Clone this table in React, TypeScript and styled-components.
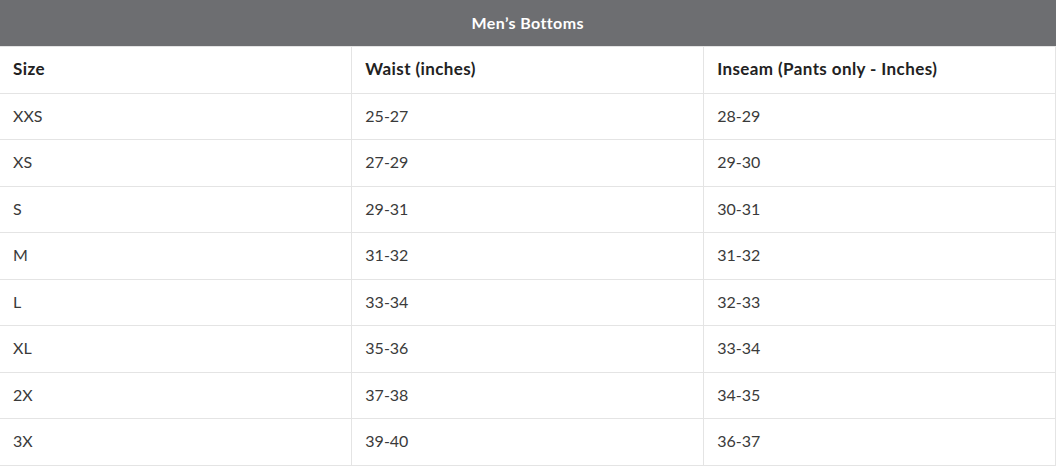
import React from 'react';
import styled, { createGlobalStyle } from 'styled-components';

const GlobalStyle = createGlobalStyle`
    body {
        margin: 0;
        background: #ffffff;
        font-family: Lato, "Noto Sans", sans-serif;
    }
`;

const rows = [
    ['XXS', '25-27', '28-29'],
    ['XS', '27-29', '29-30'],
    ['S', '29-31', '30-31'],
    ['M', '31-32', '31-32'],
    ['L', '33-34', '32-33'],
    ['XL', '35-36', '33-34'],
    ['2X', '37-38', '34-35'],
    ['3X', '39-40', '36-37'],
];

const Wrapper = styled.div`
    width: 1056px;
`;

const SizeTable = styled.table`
    width: 100%;
    border-collapse: collapse;
    table-layout: fixed;
`;

const TitleCell = styled.th`
    height: 44px;
    padding: 0 0 2px 0;
    background: #6d6e71;
    color: #ffffff;
    font-size: 16px;
    font-weight: 700;
    text-align: center;
    letter-spacing: 0.4px;
    border: none;
`;

const Cell = styled.td<{ $head?: boolean }>`
    height: 43.5px;
    padding: 0 0 2px 13px;
    border: 1px solid #e4e4e4;
    color: ${(p) => (p.$head ? '#222222' : '#3a3a3a')};
    font-size: ${(p) => (p.$head ? '17px' : '16px')};
    font-weight: ${(p) => (p.$head ? 700 : 400)};
    letter-spacing: ${(p) => (p.$head ? '0.4px' : '0')};
    text-align: left;
    vertical-align: middle;

    &:first-child {
        border-left: none;
    }
`;

const App: React.FC = () => {
    return (
        <Wrapper>
            <GlobalStyle />
            <SizeTable>
                <thead>
                    <tr>
                        <TitleCell colSpan={3}>Men’s Bottoms</TitleCell>
                    </tr>
                </thead>
                <tbody>
                    <tr>
                        <Cell $head>Size</Cell>
                        <Cell $head>Waist (inches)</Cell>
                        <Cell $head>Inseam (Pants only - Inches)</Cell>
                    </tr>
                    {rows.map((r) => (
                        <tr key={r[0]}>
                            {r.map((v, i) => (
                                <Cell key={i}>{v}</Cell>
                            ))}
                        </tr>
                    ))}
                </tbody>
            </SizeTable>
        </Wrapper>
    );
};

export default App;
